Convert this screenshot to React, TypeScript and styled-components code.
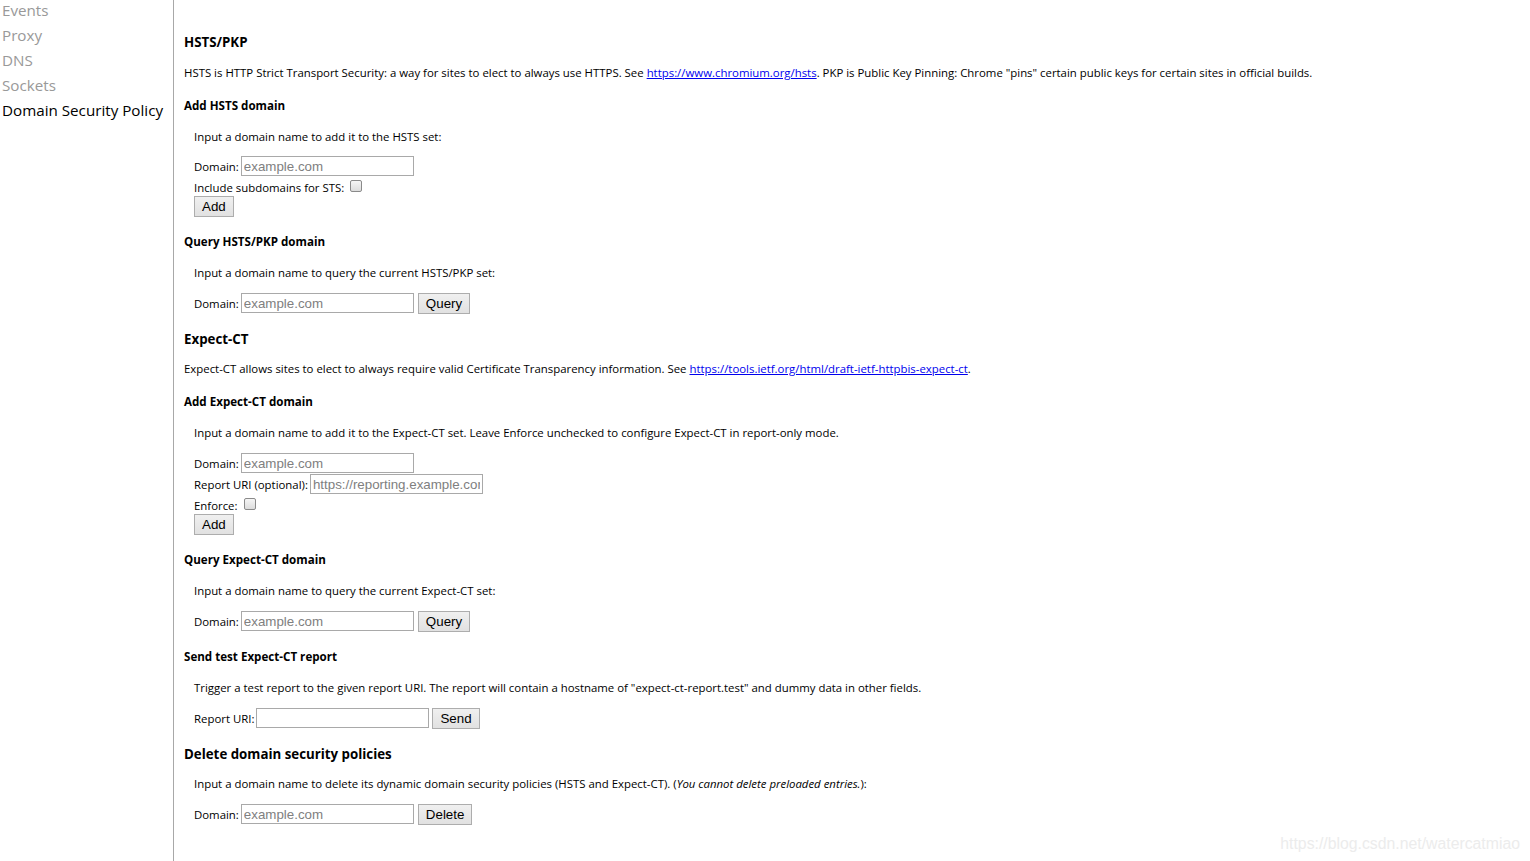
import React from "react";
import styled, { createGlobalStyle } from "styled-components";

const Global = createGlobalStyle`
  html, body { margin: 0; padding: 0; background: #fff; }
  body { font-family: "Open Sans", "Noto Sans", sans-serif; color: #000; }
  #root { min-height: 861px; }
`;

const Page = styled.div`
  display: flex;
  height: 861px;
  overflow: hidden;
  position: relative;
`;

const Sidebar = styled.nav`
  width: 173px;
  flex: none;
  border-right: 1px solid #a8a8a8;
  display: flex;
  flex-direction: column;
  margin-top: -2px;
`;

const NavItem = styled.div<{ $active?: boolean }>`
  height: 25px;
  line-height: 25px;
  padding-left: 2px;
  font-size: 15.2px;
  white-space: nowrap;
  color: ${(p) => (p.$active ? "#000" : "#999")};
`;

const Main = styled.main`
  flex: 1;
  padding: 32px 0 0 10px;
  font-size: 11.4px;
`;

const H2 = styled.h2<{ $mt: number }>`
  font-size: 13.3px;
  font-weight: 700;
  line-height: 18px;
  padding-top: 1px;
  margin: ${(p) => p.$mt}px 0 -1px;
`;

const H3 = styled.h3<{ $mt?: number }>`
  font-size: 11.6px;
  font-weight: 700;
  line-height: 16px;
  padding-top: 1px;
  margin: ${(p) => p.$mt ?? 16}px 0 -1px;
`;

const Para = styled.p<{ $mt?: number }>`
  line-height: 16px;
  margin: ${(p) => p.$mt ?? 16}px 0 0;
  white-space: nowrap;
`;

const Link = styled.a`
  color: #0000ee;
  text-decoration: underline;
`;

const Indent = styled.div`
  padding-left: 10px;
`;

const FormRow = styled.div<{ $mt?: number }>`
  display: flex;
  align-items: center;
  height: 20px;
  margin-top: ${(p) => p.$mt ?? 12}px;
  white-space: nowrap;
`;

const CheckRow = styled.div`
  display: flex;
  align-items: flex-start;
  padding-top: 4px;
  line-height: 16px;
  height: 16px;
`;

const Label = styled.span`
  margin-right: 2px;
`;

const TextInput = styled.input`
  box-sizing: border-box;
  width: 173px;
  height: 20px;
  border: 1px solid #a9a9a9;
  padding: 0 2px;
  margin: 0;
  font-family: "Liberation Sans", Arial, sans-serif;
  font-size: 13.33px;
  color: #000;
  background: #fff;
  outline: none;
  &::placeholder { color: #808080; }
`;

const Button = styled.button<{ $ml?: number }>`
  box-sizing: border-box;
  height: 21px;
  padding: 0 7px;
  margin: 0 0 0 ${(p) => p.$ml ?? 0}px;
  border: 1px solid #adadad;
  border-radius: 0;
  background: linear-gradient(#f0f0f0, #e1e1e1);
  font-family: "Liberation Sans", Arial, sans-serif;
  font-size: 13.33px;
  color: #000;
  line-height: 19px;
`;

const Check = styled.input.attrs({ type: "checkbox" })`
  appearance: none;
  box-sizing: border-box;
  width: 12px;
  height: 12px;
  margin: 0 0 0 6px;
  border: 1px solid #8a8a8a;
  border-radius: 2px;
  background: linear-gradient(#f5f5f5, #dcdcdc);
`;

const Watermark = styled.div`
  position: absolute;
  right: 10px;
  bottom: 8px;
  font-family: "Liberation Sans", Arial, sans-serif;
  font-size: 15.8px;
  color: #ececec;
`;

const DomainRow = ({ mt, button }: { mt?: number; button?: string }) => (
  <FormRow $mt={mt}>
    <Label>Domain:</Label>
    <TextInput placeholder="example.com" />
    {button && <Button $ml={4}>{button}</Button>}
  </FormRow>
);

export default function App() {
  return (
    <Page>
      <Global />
      <Sidebar>
        <NavItem>Events</NavItem>
        <NavItem>Proxy</NavItem>
        <NavItem>DNS</NavItem>
        <NavItem>Sockets</NavItem>
        <NavItem $active>Domain Security Policy</NavItem>
      </Sidebar>
      <Main>
        <H2 $mt={0}>HSTS/PKP</H2>
        <Para $mt={15}>
          HSTS is HTTP Strict Transport Security: a way for sites to elect to always use HTTPS. See{" "}
          <Link href="#">https://www.chromium.org/hsts</Link>. PKP is Public Key Pinning: Chrome "pins"
          certain public keys for certain sites in official builds.
        </Para>
        <H3>Add HSTS domain</H3>
        <Indent>
          <Para>Input a domain name to add it to the HSTS set:</Para>
          <DomainRow mt={11} />
          <CheckRow>
            Include subdomains for STS:
            <Check />
          </CheckRow>
          <Button>Add</Button>
        </Indent>
        <H3>Query HSTS/PKP domain</H3>
        <Indent>
          <Para>Input a domain name to query the current HSTS/PKP set:</Para>
          <DomainRow button="Query" />
        </Indent>

        <H2 $mt={16}>Expect-CT</H2>
        <Para $mt={14}>
          Expect-CT allows sites to elect to always require valid Certificate Transparency information. See{" "}
          <Link href="#">https://tools.ietf.org/html/draft-ietf-httpbis-expect-ct</Link>.
        </Para>
        <H3>Add Expect-CT domain</H3>
        <Indent>
          <Para>
            Input a domain name to add it to the Expect-CT set. Leave Enforce unchecked to configure Expect-CT in
            report-only mode.
          </Para>
          <DomainRow />
          <FormRow $mt={1}>
            <Label>Report URI (optional):</Label>
            <TextInput placeholder="https://reporting.example.com" />
          </FormRow>
          <CheckRow>
            Enforce:
            <Check />
          </CheckRow>
          <Button>Add</Button>
        </Indent>
        <H3>Query Expect-CT domain</H3>
        <Indent>
          <Para>Input a domain name to query the current Expect-CT set:</Para>
          <DomainRow button="Query" />
        </Indent>
        <H3 $mt={17}>Send test Expect-CT report</H3>
        <Indent>
          <Para>
            Trigger a test report to the given report URI. The report will contain a hostname of
            "expect-ct-report.test" and dummy data in other fields.
          </Para>
          <FormRow>
            <Label>Report URI:</Label>
            <TextInput />
            <Button $ml={3}>Send</Button>
          </FormRow>
        </Indent>

        <H2 $mt={16}>Delete domain security policies</H2>
        <Indent>
          <Para $mt={14}>
            Input a domain name to delete its dynamic domain security policies (HSTS and Expect-CT). (
            <i>You cannot delete preloaded entries.</i>):
          </Para>
          <DomainRow button="Delete" />
        </Indent>
      </Main>
      <Watermark>https://blog.csdn.net/watercatmiao</Watermark>
    </Page>
  );
}
